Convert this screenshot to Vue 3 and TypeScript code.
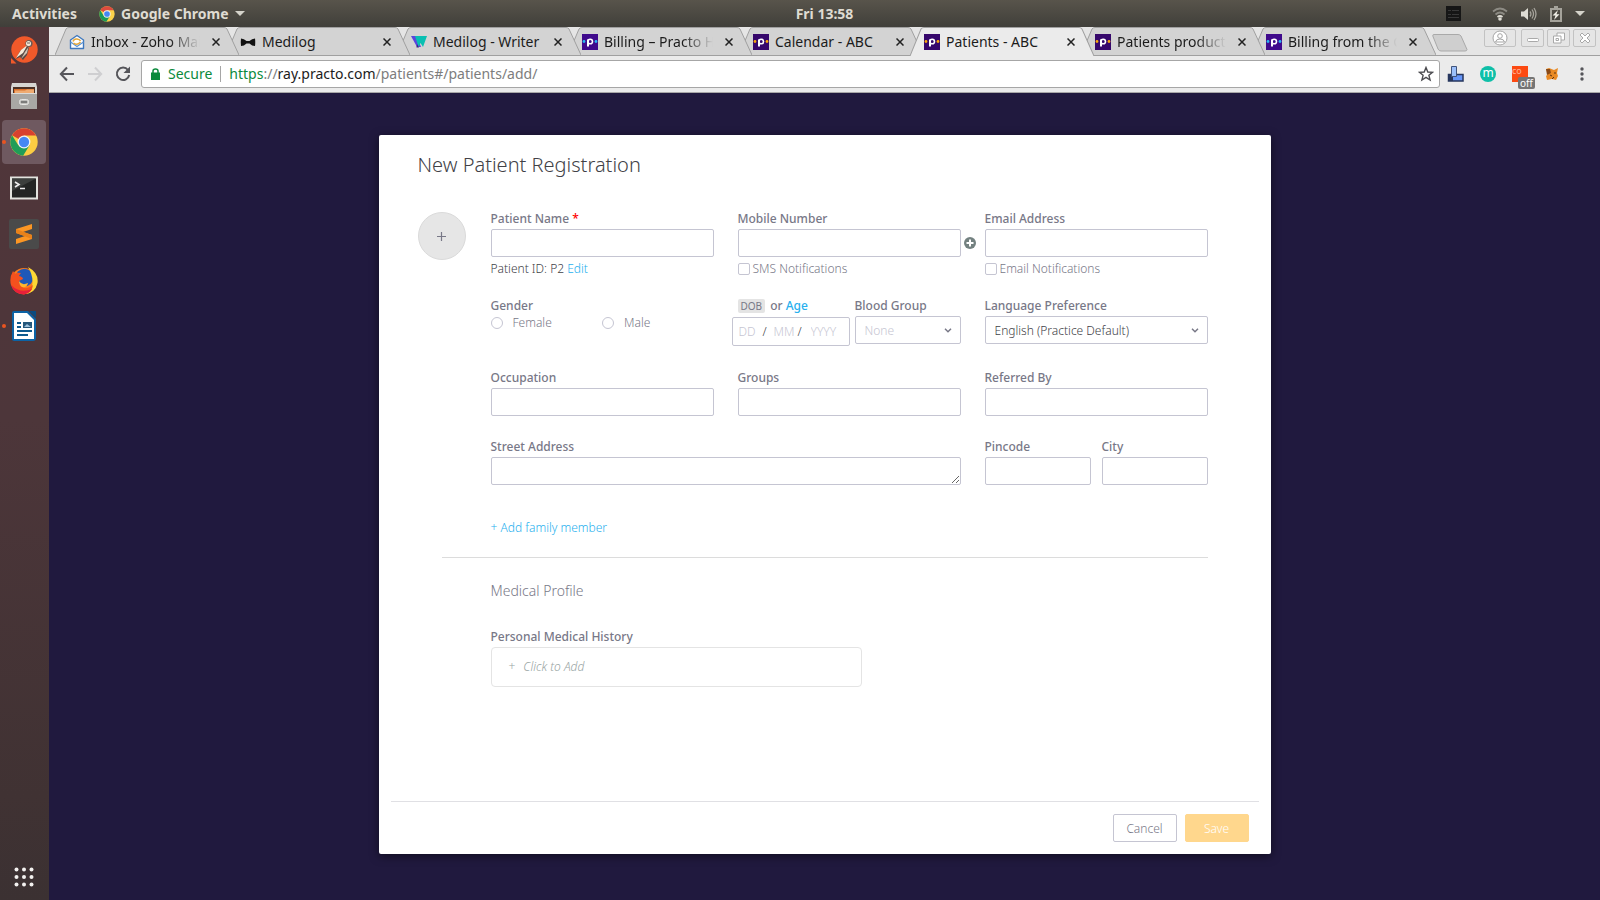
<script setup lang="ts">
import { ref } from 'vue'

type Favicon = 'mail' | 'bow' | 'writer' | 'help' | 'ray'

interface Tab {
  title: string
  icon: Favicon
  active?: boolean
  clipped?: boolean
}

const tabs: Tab[] = [
  { title: 'Inbox - Zoho Mail', icon: 'mail', clipped: true },
  { title: 'Medilog', icon: 'bow' },
  { title: 'Medilog - Writer', icon: 'writer' },
  { title: 'Billing – Practo Help', icon: 'help', clipped: true },
  { title: 'Calendar - ABC', icon: 'ray' },
  { title: 'Patients - ABC', icon: 'ray', active: true },
  { title: 'Patients product', icon: 'ray', clipped: true },
  { title: 'Billing from the Calendar', icon: 'help', clipped: true },
]

const stackOrder = (tab: Tab, index: number): number => (tab.active ? 20 : 10 - index)

const gender = ref('')
const sms = ref(false)
const emailNotify = ref(false)
const bloodGroup = ref('None')
const language = ref('English (Practice Default)')
</script>

<template>
  <div class="desktop">
    <header class="panel">
      <div class="panel-side">
        <button class="panel-btn">Activities</button>
        <button class="panel-btn app-menu">
          <svg width="16" height="16" viewBox="0 0 48 48" aria-hidden="true">
            <circle cx="24" cy="24" r="23" fill="#fbd24a" />
            <path d="M24 24 4 12.5A23 23 0 0 1 44 12.5H24Z" fill="#dd4b3e" />
            <path d="M4 12.5A23 23 0 0 0 22 47L33 30 24 24 14 29Z" fill="#1a9a57" />
            <circle cx="24" cy="24" r="11" fill="#f3f3f3" />
            <circle cx="24" cy="24" r="8.5" fill="#4587f3" />
          </svg>
          Google Chrome
          <svg width="10" height="5" viewBox="0 0 10 5" aria-hidden="true"><path d="M0 0H10L5 5Z" fill="#d5d3cb" /></svg>
        </button>
      </div>
      <time class="clock">Fri 13:58</time>
      <div class="panel-side tray">
        <svg class="tray-app" width="15" height="15" viewBox="0 0 15 15">
          <path d="M0 0H15V15H0Z" fill="#161616" />
          <path d="M2 4.500H5M6 4.500H13M2 8.500H5M6 8.500H13M2 11.500H13" stroke="#383838" />
        </svg>
        <svg width="16" height="14" viewBox="0 0 16 14" fill="none">
          <path d="M1 4.500Q8-1.500 15 4.500M3.500 7.500Q8 3.500 12.500 7.500" stroke="#8d8b84" stroke-width="1.700" />
          <path d="M5.500 10Q8 8 10.500 10" stroke="#dedcd4" stroke-width="1.700" />
          <circle cx="8" cy="12" r="1.800" fill="#dedcd4" />
        </svg>
        <svg width="16" height="14" viewBox="0 0 16 14" fill="none">
          <path d="M0 4.500H3L7 1V13L3 9.500H0Z" fill="#dedcd4" />
          <path d="M9 4.500Q10.800 7 9 9.500M11 2.500Q14 7 11 11.500M13 1Q17 7 13 13" stroke="#a5a39b" stroke-width="1.300" />
        </svg>
        <svg width="12" height="16" viewBox="0 0 12 16">
          <path d="M4 0H8V2H12V16H0V2H4ZM2 4V14H10V4Z" fill="#a5a39b" fill-rule="evenodd" />
          <path d="M8 4 2.500 9.500H5.500L4 14 9.500 8.300H6.500Z" fill="#f0eee6" />
        </svg>
        <svg width="10" height="5" viewBox="0 0 10 5"><path d="M0 0H10L5 5Z" fill="#d5d3cb" /></svg>
      </div>
    </header>

    <div class="workspace">
      <nav class="dock" aria-label="Dock">
        <button class="dock-item" aria-label="Postman">
          <svg width="28" height="28" viewBox="0 0 28 28">
            <circle cx="14.500" cy="13.500" r="13.200" fill="#f1592a" />
            <path d="M1 22V27.500H6.500Z" fill="#f1592a" />
            <path d="M17 10 10 15 6 23 10 21 13 24 17 19 19 12Z" fill="#5b4a45" />
            <path d="M17.500 9 11 14 6 22 13 17Z" fill="#f6ead9" />
            <path d="M18.500 11 17 17 11 23 15 16Z" fill="#d4c3b3" />
            <circle cx="19" cy="7.500" r="3.600" fill="#6c5b56" />
            <circle cx="18.500" cy="7.500" r="2.500" fill="#f6ead9" />
            <path d="M17 7H20" stroke="#6c5b56" />
          </svg>
        </button>
        <button class="dock-item" aria-label="Files">
          <svg width="28" height="28" viewBox="0 0 28 28">
            <path d="M2 1H26L27 5V26H1V5Z" fill="#d6d5d2" />
            <path d="M3 5H25V12H3Z" fill="#4b3024" />
            <path d="M4 7H24V11H4Z" fill="#d9702c" />
            <path d="M5 8.500H15L17 7.500H24V11H5Z" fill="#efab72" />
            <path d="M1 11H27V27H1Z" fill="#a9a8a5" />
            <path d="M1 11.500H27" stroke="#dcdbd8" />
            <rect x="9.500" y="17.500" width="9" height="5" rx="2" fill="#c0bfbc" stroke="#e6e6e4" />
            <path d="M11 20H17" stroke="#666" stroke-width="1.500" />
          </svg>
        </button>
        <button class="dock-item running focused" aria-label="Google Chrome">
          <svg width="28" height="28" viewBox="0 0 48 48">
            <circle cx="24" cy="24" r="23.500" fill="#fbcd43" />
            <path d="M24 24 3.500 12.500A23.500 23.500 0 0 1 44.800 13H24Z" fill="#d8412f" />
            <path d="M3.500 12.500A23.500 23.500 0 0 0 22.500 47.500L33.500 29.500 24 24 14.500 30Z" fill="#1f9d58" />
            <circle cx="24" cy="24" r="11" fill="#f3f3f3" />
            <circle cx="24" cy="24" r="8.800" fill="#4587f3" />
          </svg>
        </button>
        <button class="dock-item" aria-label="Terminal">
          <svg width="28" height="24" viewBox="0 0 28 24">
            <path d="M0 .5H28V23.500H0Z" fill="#e2e3de" />
            <path d="M2 2.500H26V21.500H2Z" fill="#232524" />
            <path d="M2 2.500H26L2 15Z" fill="#3c3f3d" />
            <path d="M5 6 9 8.500 5 11M10 12.500H15" stroke="#eee" stroke-width="1.600" fill="none" />
          </svg>
        </button>
        <button class="dock-item" aria-label="Sublime Text">
          <svg width="30" height="30" viewBox="0 0 30 30">
            <rect width="30" height="30" rx="2" fill="#4a4a4a" />
            <path d="M7 10 23 5V10L14 13 23 16V20L7 25V20L16 17 7 14Z" fill="#fb9624" />
            <path d="M7 10 23 16V20L7 14Z" fill="#e8821a" />
          </svg>
        </button>
        <button class="dock-item" aria-label="Firefox">
          <svg width="28" height="29" viewBox="0 0 28 29">
            <circle cx="14" cy="15" r="13" fill="#fb7b1c" />
            <circle cx="14.500" cy="11.500" r="8.800" fill="#1e58b8" />
            <path d="M18 1Q29 7 27.500 17 25 28 14 28 20 26 22 20 24 11 18 1Z" fill="#fdd835" />
            <path d="M3 5Q-1 12 1 19 4 28 14 28.500 22 27 23 19 19 23 14 22 9 20 9 15L13 13Q13 11 9 10 10 8 11 7 7 6 6 8 4 7 3 5Z" fill="#f4511e" />
            <path d="M9 15Q12 20 18 17 17 22 12 21 9 19 9 15Z" fill="#ffb62e" />
            <path d="M1 19Q4 28 14 28.500 20 27 22 23 10 28 1 19Z" fill="#e8203a" />
          </svg>
        </button>
        <button class="dock-item running" aria-label="LibreOffice Writer">
          <svg width="24" height="30" viewBox="0 0 24 30">
            <path d="M2 0H16L24 8V27Q24 30 21 30H2Q0 30 0 28V2Q0 0 2 0Z" fill="#0c63a5" />
            <path d="M17 0H24V7Z" fill="#0a4b80" />
            <path d="M2 2H15L22 9V28H2Z" fill="#fff" />
            <path d="M5 12H9M5 16H9M5 20H20M5 24H16" stroke="#0d5a8f" stroke-width="1.800" />
            <path d="M11 11H20V17H11Z" fill="#25577b" />
            <path d="M12 16 15 13 19 16Z" fill="#9fc2dc" />
          </svg>
        </button>
        <button class="dock-item apps" aria-label="Show Applications">
          <svg width="20" height="20" viewBox="0 0 20 20" fill="#f3f1ef">
            <circle cx="2.500" cy="2.500" r="2" /><circle cx="10" cy="2.500" r="2" /><circle cx="17.500" cy="2.500" r="2" />
            <circle cx="2.500" cy="10" r="2" /><circle cx="10" cy="10" r="2" /><circle cx="17.500" cy="10" r="2" />
            <circle cx="2.500" cy="17.500" r="2" /><circle cx="10" cy="17.500" r="2" /><circle cx="17.500" cy="17.500" r="2" />
          </svg>
        </button>
      </nav>

      <div class="browser">
        <div class="tabstrip">
          <div
            v-for="(tab, i) in tabs"
            :key="tab.title"
            class="tab"
            :class="{ active: tab.active }"
            :style="{ zIndex: stackOrder(tab, i) }"
          >
            <svg class="tab-shape" viewBox="0 0 184 28" preserveAspectRatio="none" aria-hidden="true">
              <path d="M0 28 11 2Q12 .5 14 .5H169Q171 .5 172 2L184 28Z" />
              <path class="edge" d="M0 28 11 2Q12 .5 14 .5H169Q171 .5 172 2L184 28" />
            </svg>
            <svg class="favicon" width="16" height="16" viewBox="0 0 16 16" aria-hidden="true">
              <template v-if="tab.icon === 'mail'">
                <path d="M1.500 6 8 1.500 14.500 6V14.500H1.500Z" fill="#fff" stroke="#3f78bd" stroke-width="1.400" stroke-linejoin="round" />
                <path d="M1.500 8 8 12.500 14.500 8" fill="none" stroke="#5c94d2" stroke-width="1.200" />
                <path d="M4 7.500Q5 4.500 8 5T11.500 7M4.500 9Q8 12 11.500 8" fill="none" stroke="#e5a73a" stroke-width="1.500" />
              </template>
              <path v-else-if="tab.icon === 'bow'" d="M1 4.500Q.5 8 1 12 4 12 6.500 9.500H9.500Q12 12 15 12 15.500 8 15 4.500 12 4.500 9.500 7H6.500Q4 4.500 1 4.500Z" fill="#111" />
              <template v-else-if="tab.icon === 'writer'">
                <path d="M0 2H6L10 13H6Z" fill="#5b45dd" />
                <path d="M4 2H16L12 13 9.500 9 7.500 13Z" fill="#08bfb2" />
                <path d="M6 10 8 13.500H5.500Z" fill="#3a2580" />
              </template>
              <template v-else>
                <rect width="16" height="16" :fill="tab.icon === 'help' ? '#3f0a8c' : '#36076b'" />
                <circle cx="2" cy="7.500" r="1.400" :fill="tab.icon === 'help' ? '#28b5f4' : '#f9a70b'" />
                <circle cx="14" cy="7.500" r="1.400" :fill="tab.icon === 'help' ? '#28b5f4' : '#f9a70b'" />
                <path d="M6 12.500V5.500" stroke="#fff" stroke-width="2" />
                <circle cx="8.200" cy="7.500" r="2.300" fill="none" stroke="#fff" stroke-width="1.600" />
              </template>
            </svg>
            <a class="tab-title" :class="{ clipped: tab.clipped }" href="#">{{ tab.title }}</a>
            <button class="tab-close" aria-label="Close tab">
              <svg width="8" height="8" viewBox="0 0 8 8"><path d="M.5 .5 7.500 7.500M7.500 .5 .5 7.500" stroke="#222" stroke-width="1.500" /></svg>
            </button>
          </div>
          <button class="new-tab" aria-label="New tab">
            <svg width="36" height="18" viewBox="0 0 36 18"><path d="M2 .5H26Q28 .5 29 2L35 15.500Q35 17 33 17H9Q7 17 6 15L.8 2Q.5 .5 2 .5Z" fill="#cfcfcf" stroke="#a9a9a9" /></svg>
          </button>
          <div class="window-controls">
            <button class="user" aria-label="Profile">
              <svg width="16" height="16" viewBox="0 0 16 16" fill="#fff" stroke="#a5a5a5"><circle cx="8" cy="8" r="7" /><circle cx="8" cy="6" r="2.300" /><path d="M3.500 12Q4 9 8 9T12.500 12Z" /></svg>
            </button>
            <button aria-label="Minimize">
              <svg width="12" height="12" viewBox="0 0 12 12" fill="#fff" stroke="#a9a9a9"><rect x=".5" y="6.500" width="11" height="3" rx="1" /></svg>
            </button>
            <button aria-label="Restore">
              <svg width="12" height="12" viewBox="0 0 12 12" fill="#fff" stroke="#a9a9a9"><path d="M4 1H11.500V8H4Z" /><path d="M.5 4H8V11H.5Z" /><path d="M3 6.500H5.500V8.500H3Z" /></svg>
            </button>
            <button aria-label="Close">
              <svg width="12" height="12" viewBox="0 0 12 12" fill="#fff" stroke="#a9a9a9"><path d="M3 1 6 4 9 1 11 3 8 6 11 9 9 11 6 8 3 11 1 9 4 6 1 3Z" /></svg>
            </button>
          </div>
        </div>

        <div class="toolbar">
          <button class="nav" aria-label="Back">
            <svg width="16" height="16" viewBox="0 0 16 16" fill="none" stroke="#55555a" stroke-width="2"><path d="M15 8H2M8 1.500 1.800 8 8 14.500" /></svg>
          </button>
          <button class="nav" aria-label="Forward">
            <svg width="16" height="16" viewBox="0 0 16 16" fill="none" stroke="#cfcfd1" stroke-width="2"><path d="M1 8H14M8 1.500 14.200 8 8 14.500" /></svg>
          </button>
          <button class="nav" aria-label="Reload">
            <svg width="16" height="16" viewBox="0 0 16 16" fill="none" stroke="#55555a" stroke-width="2"><path d="M13 4A6.200 6.200 0 1 0 14.200 9" /><path d="M15 .5V7H8.500Z" fill="#55555a" stroke="none" /></svg>
          </button>
          <div class="omnibox">
            <svg class="lock" width="9" height="12" viewBox="0 0 9 12"><path d="M0 4.500H9V12H0Z" fill="#0b8a3c" /><path d="M2 5V3Q2 1 4.500 1T7 3V5" fill="none" stroke="#0b8a3c" stroke-width="1.500" /></svg>
            <span class="secure">Secure</span>
            <span class="url"><span class="scheme">https</span>://<span class="host">ray.practo.com</span>/patients#/patients/add/</span>
            <button class="star" aria-label="Bookmark this page">
              <svg width="16" height="16" viewBox="0 0 16 16"><path d="M8 1.500 9.800 6 14.500 6.300 10.900 9.300 12.100 14 8 11.400 3.900 14 5.100 9.300 1.500 6.300 6.200 6Z" fill="none" stroke="#4c4c50" stroke-width="1.400" /></svg>
            </button>
          </div>
          <button class="ext" aria-label="Screen capture">
            <svg width="18" height="16" viewBox="0 0 18 16"><path d="M1.500 8.500H16V15H1.500Z" fill="#6796f8" stroke="#26365e" stroke-width="1.500" /><path d="M1 9H6V15H1Z" fill="#26365e" /><path d="M4.500 .5H9.500V10.500H4.500Z" fill="#9cc0fa" stroke="#41547c" /></svg>
          </button>
          <button class="ext" aria-label="Momentum">
            <span class="round-m">m</span>
          </button>
          <button class="ext" aria-label="Community extension">
            <span class="com">co</span>
            <span class="off">off</span>
          </button>
          <button class="ext" aria-label="Metafox">
            <svg width="14" height="14" viewBox="0 0 14 14"><path d="M1 2 4 1 9 3 13 1 12 6 13 9 11 13 7 12 2 13 1 9 3 7Z" fill="#e98a24" /><path d="M1 2 5 2 6 6 2 8Z" fill="#8a4a17" /><path d="M5 8 7 9M9 6H11M7 12 9 10" stroke="#5a3413" /></svg>
          </button>
          <button class="ext" aria-label="Browser menu">
            <svg width="4" height="14" viewBox="0 0 4 14" fill="#55555a"><circle cx="2" cy="2" r="1.700" /><circle cx="2" cy="7" r="1.700" /><circle cx="2" cy="12" r="1.700" /></svg>
          </button>
        </div>

        <main class="page">
          <form class="dialog" @submit.prevent>
            <div class="body">
              <h1>New Patient Registration</h1>
              <div class="profile">
                <button type="button" class="avatar" aria-label="Add photo">
                  <svg width="9" height="9" viewBox="0 0 9 9"><path d="M4.500 0V9M0 4.500H9" stroke="#787887" stroke-width="1.200" /></svg>
                </button>
                <div class="fields">
                  <div class="row first">
                    <div class="field">
                      <label for="name">Patient Name <span class="required">*</span></label>
                      <input id="name" type="text" />
                      <p class="hint">Patient ID: P2 <a href="#">Edit</a></p>
                    </div>
                    <div class="field">
                      <label for="mobile">Mobile Number</label>
                      <div class="with-add">
                        <input id="mobile" type="tel" />
                        <button type="button" class="add-number" aria-label="Add another number">
                          <svg width="12" height="12" viewBox="0 0 12 12"><circle cx="6" cy="6" r="6" fill="#738180" /><path d="M6 2.500V9.500M2.500 6H9.500" stroke="#fff" stroke-width="2" /></svg>
                        </button>
                      </div>
                      <label class="check"><input v-model="sms" type="checkbox" />SMS Notifications</label>
                    </div>
                    <div class="field">
                      <label for="email">Email Address</label>
                      <input id="email" type="email" />
                      <label class="check"><input v-model="emailNotify" type="checkbox" />Email Notifications</label>
                    </div>
                  </div>

                  <div class="row second">
                    <div class="field" role="radiogroup" aria-labelledby="gender-label">
                      <span id="gender-label" class="caption">Gender</span>
                      <div class="radios">
                        <label><input v-model="gender" type="radio" name="gender" value="female" />Female</label>
                        <label><input v-model="gender" type="radio" name="gender" value="male" />Male</label>
                      </div>
                    </div>
                    <div class="split birth">
                      <div class="field">
                        <span class="caption"><span class="badge">DOB</span>or <a href="#">Age</a></span>
                        <div class="date">
                          <input type="text" placeholder="DD" aria-label="Day" /><span>/</span>
                          <input type="text" placeholder="MM" aria-label="Month" /><span>/</span>
                          <input class="year" type="text" placeholder="YYYY" aria-label="Year" />
                        </div>
                      </div>
                      <div class="field">
                        <label for="blood">Blood Group</label>
                        <div class="select">
                          <select id="blood" v-model="bloodGroup" class="empty"><option>None</option><option>A+</option><option>B+</option><option>O+</option></select>
                          <svg width="8" height="5" viewBox="0 0 8 5"><path d="M1 .8 4 3.800 7 .8" fill="none" stroke="#787887" stroke-width="1.500" /></svg>
                        </div>
                      </div>
                    </div>
                    <div class="field">
                      <label for="language">Language Preference</label>
                      <div class="select">
                        <select id="language" v-model="language"><option>English (Practice Default)</option><option>Hindi</option></select>
                        <svg width="8" height="5" viewBox="0 0 8 5"><path d="M1 .8 4 3.800 7 .8" fill="none" stroke="#787887" stroke-width="1.500" /></svg>
                      </div>
                    </div>
                  </div>

                  <div class="row third">
                    <div class="field"><label for="occupation">Occupation</label><input id="occupation" type="text" /></div>
                    <div class="field"><label for="groups">Groups</label><input id="groups" type="text" /></div>
                    <div class="field"><label for="referred">Referred By</label><input id="referred" type="text" /></div>
                  </div>

                  <div class="row">
                    <div class="field wide"><label for="street">Street Address</label><textarea id="street"></textarea></div>
                    <div class="split">
                      <div class="field"><label for="pincode">Pincode</label><input id="pincode" type="text" /></div>
                      <div class="field"><label for="city">City</label><input id="city" type="text" /></div>
                    </div>
                  </div>

                  <a class="family" href="#">+ Add family member</a>
                </div>
              </div>
              <hr />
              <section class="medical">
                <h2>Medical Profile</h2>
                <h3>Personal Medical History</h3>
                <button type="button" class="history"><span>+</span><em>Click to Add</em></button>
              </section>
            </div>
            <footer class="actions">
              <button type="button" class="cancel">Cancel</button>
              <button type="submit" class="save">Save</button>
            </footer>
          </form>
        </main>
      </div>
    </div>
  </div>
</template>

<style>
html,
body {
  margin: 0;
}
</style>

<style scoped>
* {
  box-sizing: border-box;
}
button,
input,
select,
textarea {
  margin: 0;
  padding: 0;
  font: inherit;
  color: inherit;
}
button {
  border: 0;
  background: none;
}
a {
  text-decoration: none;
}
svg {
  display: block;
  flex: none;
}
.desktop {
  display: flex;
  flex-direction: column;
  min-height: 100vh;
  font-family: 'Noto Sans', 'Open Sans', sans-serif;
}
.panel {
  display: flex;
  align-items: center;
  height: 27px;
  padding: 0 12px;
  background: linear-gradient(#58544b, #403f3a);
  color: #dfdbd2;
  font-size: 14px;
  font-weight: 700;
}
.panel-side {
  flex: 1;
  display: flex;
  align-items: center;
  gap: 22px;
}
.app-menu {
  display: flex;
  align-items: center;
  gap: 6px;
}
.clock {
  margin-left: 52px;
}
.tray {
  justify-content: flex-end;
  gap: 13px;
  padding-right: 3px;
}
.tray-app {
  margin-right: 18px;
}
.workspace {
  flex: 1;
  display: flex;
}
.dock {
  width: 49px;
  flex: none;
  display: flex;
  flex-direction: column;
  gap: 2px;
  padding: 1px 3px 1px 2px;
  background: linear-gradient(#51363a, #4d363a 45%, #403233 88%, #3b3132);
}
.dock-item {
  position: relative;
  display: flex;
  align-items: center;
  justify-content: center;
  height: 44px;
  border-radius: 4px;
}
.focused {
  background: #6f5960;
}
.running::before {
  content: '';
  position: absolute;
  left: 0;
  width: 4px;
  height: 4px;
  border-radius: 50%;
  background: #e95420;
}
.apps {
  margin-top: auto;
}
.browser {
  flex: 1;
  min-width: 0;
  display: flex;
  flex-direction: column;
}
.tabstrip {
  position: relative;
  display: flex;
  height: 29px;
  padding-left: 6px;
  background: #e5e5e5;
  border-bottom: 1px solid #a0a0a0;
}
.tab {
  position: relative;
  flex: 0 1 184px;
  min-width: 60px;
  display: flex;
  align-items: center;
  height: 28px;
  margin-right: -13px;
  padding: 1px 15px 0 14px;
}
.tab.active {
  height: 29px;
  padding-bottom: 1px;
}
.tab-shape {
  position: absolute;
  inset: 0;
  width: 100%;
  height: 100%;
  fill: #d3d3d3;
}
.active .tab-shape {
  fill: #ebebeb;
}
.tab-shape .edge {
  fill: none;
  stroke: #a0a0a0;
}
.favicon {
  position: relative;
}
.tab-title {
  position: relative;
  flex: 1;
  min-width: 0;
  margin-left: 6px;
  overflow: hidden;
  white-space: nowrap;
  color: #1c1c1c;
  font-size: 14px;
  line-height: 20px;
}
.clipped {
  mask-image: linear-gradient(to right, #000 calc(100% - 30px), transparent);
}
.tab-close {
  position: relative;
  padding: 4px;
  margin-left: 8px;
}
.new-tab {
  align-self: flex-start;
  margin: 7px 0 0 9px;
}
.window-controls {
  display: flex;
  gap: 3px;
  height: 18px;
  margin: 2px 4px 0 auto;
}
.window-controls button {
  display: flex;
  align-items: center;
  justify-content: center;
  width: 23px;
  border: 1px solid #c2c2c2;
  border-radius: 2px;
}
.window-controls .user {
  width: 32px;
  margin-right: 2px;
}
.toolbar {
  display: flex;
  align-items: center;
  height: 37px;
  padding: 0 4px;
  background: #ebebeb;
  border-bottom: 1px solid #a8a8a8;
}
.nav {
  width: 28px;
  padding: 6px;
}
.omnibox {
  flex: 1;
  display: flex;
  align-items: center;
  height: 28px;
  margin-left: 4px;
  padding: 0 5px 0 9px;
  border: 1px solid #a6a6a6;
  border-radius: 3px;
  background: #fff;
  font-size: 14px;
  line-height: 16px;
}
.secure {
  margin-left: 8px;
  padding-right: 8px;
  border-right: 1px solid #a6a6a6;
  color: #0b8a3c;
}
.url {
  flex: 1;
  margin-left: 8px;
  color: #7d7d7d;
}
.scheme {
  color: #0b8a3c;
}
.host {
  color: #1c1c1c;
}
.ext {
  position: relative;
  display: flex;
  align-items: center;
  justify-content: center;
  width: 32px;
  height: 32px;
}
.ext:last-child {
  width: 28px;
}
.round-m {
  width: 16px;
  height: 16px;
  border-radius: 50%;
  background: #0fbfa8;
  color: #fff;
  font-size: 12px;
  line-height: 14px;
}
.com {
  width: 16px;
  height: 16px;
  background: #fc4a12;
  color: #ffb39a;
  font-size: 9px;
  line-height: 9px;
  text-align: left;
}
.off {
  position: absolute;
  right: 1px;
  bottom: 1px;
  padding: 0 2px;
  border-radius: 2px;
  background: #757575;
  color: #fff;
  font-size: 10px;
  line-height: 12px;
}
.page {
  flex: 1;
  display: flex;
  justify-content: center;
  padding: 42px 24px 46px;
  background: #20193e;
}
.dialog {
  display: flex;
  flex-direction: column;
  width: 100%;
  max-width: 892px;
  border-radius: 2px;
  background: #fff;
  box-shadow: 0 2px 10px rgba(0, 0, 0, 0.5);
  color: #787887;
  font-size: 12px;
  font-weight: 300;
  line-height: 16px;
}
.body {
  flex: 1;
  padding: 16px 63px 24px 39px;
}
h1 {
  margin: 0 0 31px;
  color: #414146;
  font-size: 20px;
  font-weight: 300;
  line-height: 28px;
}
.profile {
  display: flex;
  gap: 25px;
}
.avatar {
  flex: none;
  display: flex;
  align-items: center;
  justify-content: center;
  width: 48px;
  height: 48px;
  margin-top: 2px;
  border: 1px solid #dadada;
  border-radius: 50%;
  background: #e6e6e6;
}
.fields {
  flex: 1;
  min-width: 0;
}
.row {
  display: grid;
  grid-template-columns: repeat(3, minmax(0, 1fr));
  column-gap: 24px;
}
.first {
  margin-bottom: 20px;
}
.second {
  margin-bottom: 23px;
}
.third {
  margin-bottom: 22px;
}
.wide {
  grid-column: span 2;
}
.split {
  display: grid;
  grid-template-columns: 1fr 1fr;
  column-gap: 11px;
}
.field {
  display: flex;
  flex-direction: column;
  min-width: 0;
}
.field > label:first-child,
.caption,
h3 {
  margin: 0 0 1px;
  font-size: 12px;
  font-weight: 500;
  line-height: 18px;
}
.required {
  color: #f00;
}
.field input:not([type='checkbox'], [type='radio']),
textarea,
select {
  display: block;
  width: 100%;
  height: 28px;
  padding: 0 8px;
  border: 1px solid #c5c5d2;
  border-radius: 2px;
  background: #fff;
  outline: none;
}
textarea {
  min-height: 28px;
  resize: both;
}
.hint,
.field .check {
  margin: 4px 0 0;
}
.hint {
  color: #414146;
}
.body a {
  color: #28b0ee;
}
.with-add {
  position: relative;
}
.add-number {
  position: absolute;
  left: calc(100% + 3px);
  top: 8px;
}
.check,
.radios label {
  display: flex;
  align-items: center;
}
input[type='checkbox'],
input[type='radio'] {
  appearance: none;
  width: 12px;
  height: 12px;
  border: 1px solid #c5c5d2;
  border-radius: 2px;
  background: #fff;
}
input[type='checkbox'] {
  margin-right: 3px;
}
input[type='radio'] {
  margin-right: 10px;
  border-radius: 50%;
}
input:checked {
  background: #28b0ee;
}
.radios {
  display: grid;
  grid-template-columns: 1fr 1fr;
  line-height: 14px;
}
.birth {
  grid-template-columns: 118px minmax(0, 1fr);
  column-gap: 5px;
  margin-left: -6px;
}
.birth .caption {
  margin-bottom: 2px;
  padding-left: 6px;
}
.badge {
  margin-right: 5px;
  padding: 0 3px;
  border-radius: 2px;
  background: #e4e4e4;
  font-size: 10px;
  font-weight: 400;
}
.date {
  display: flex;
  align-items: center;
  height: 29px;
  padding: 0 6px;
  border: 1px solid #c5c5d2;
  border-radius: 2px;
  color: #414146;
}
.field .date input {
  flex: none;
  width: 24px;
  height: 24px;
  padding: 0;
  border: 0;
}
.field .date .year {
  flex: 1;
  min-width: 0;
  padding-left: 2px;
}
.date span {
  width: 11px;
}
::placeholder {
  color: #c5c5d2;
  opacity: 1;
}
.select {
  position: relative;
}
.field .select select {
  appearance: none;
  padding: 2px 9px 0;
  color: #414146;
}
.field .select .empty {
  color: #c5c5d2;
}
.select svg {
  position: absolute;
  right: 9px;
  top: 12px;
  pointer-events: none;
}
.family {
  display: inline-block;
  margin-top: 35px;
}
hr {
  margin: 21px 0 23px 24px;
  border: 0;
  border-top: 1px solid #dcdcdc;
}
.medical {
  margin-left: 73px;
}
h2 {
  margin: 0 0 27px;
  font-size: 14px;
  font-weight: 300;
  line-height: 20px;
}
.history {
  display: flex;
  align-items: center;
  gap: 8px;
  width: 371px;
  max-width: 100%;
  height: 40px;
  padding: 0 17px;
  border: 1px solid #e4e4e4;
  border-radius: 4px;
  color: #98a4a3;
}
.actions {
  display: flex;
  justify-content: flex-end;
  gap: 8px;
  margin: 0 12px;
  padding: 12px 10px;
  border-top: 1px solid #e0e0e4;
}
.actions button {
  width: 64px;
  height: 28px;
  padding-top: 1px;
  border: 1px solid #c5c5d2;
  border-radius: 2px;
}
.actions .save {
  border-color: #ffd78d;
  background: #ffd78d;
  color: #fff;
}
</style>
